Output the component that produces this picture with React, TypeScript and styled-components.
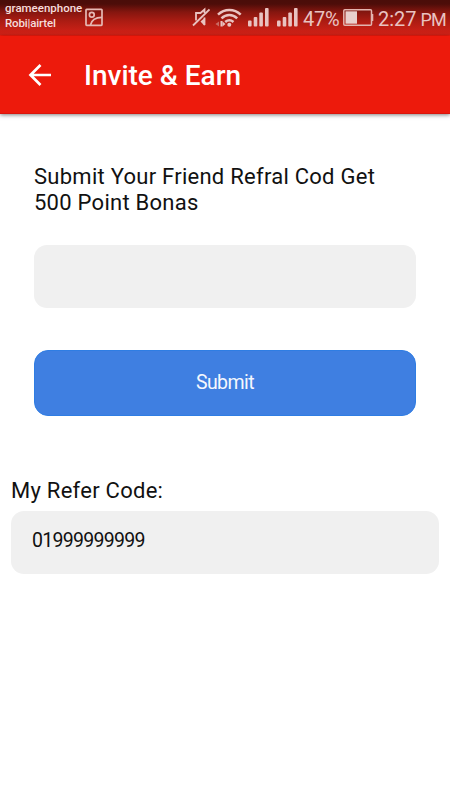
import React from "react";
import styled, { createGlobalStyle } from "styled-components";

const GlobalStyle = createGlobalStyle`
  * { box-sizing: border-box; }
  body { margin: 0; background: #fff; font-family: Roboto, "Liberation Sans", sans-serif; }
`;

const Screen = styled.div`
  width: 450px;
  height: 800px;
  display: flex;
  flex-direction: column;
  overflow: hidden;
  background: #fff;
`;

const StatusBar = styled.header`
  height: 36px;
  flex: none;
  display: flex;
  align-items: flex-start;
  padding-left: 4px;
  color: #e9c3c1;
  background: linear-gradient(#4a0d09 0, #4d0d09 4px, #85160f 12px, #ab1c13 21px, #c92016 31px, #ce2117 35px, #ed1a0c 35px);
`;

const Carriers = styled.div`
  width: 81px;
  padding: 1px 0 0 1px;
  font-size: 11.5px;
  line-height: 15px;
  font-weight: 500;
  white-space: nowrap;
  color: #f5dddc;
`;

const Carrier = styled.div<{ $spacing: number }>`
  letter-spacing: ${(p) => p.$spacing}px;
`;

const Glyph = styled.svg<{ $gap?: number }>`
  display: block;
  flex: none;
  margin-left: ${(p) => p.$gap ?? 0}px;
`;

const StatusText = styled.span<{ $gap: number; $width: number; $spacing: number }>`
  margin-left: ${(p) => p.$gap}px;
  width: ${(p) => p.$width}px;
  font-size: 20px;
  line-height: 38px;
  letter-spacing: ${(p) => p.$spacing}px;
  white-space: nowrap;

  small {
    margin-left: -1px;
    font-size: 18px;
    letter-spacing: -1px;
  }
`;

const AppBar = styled.nav`
  height: 78px;
  flex: none;
  display: flex;
  align-items: center;
  padding-left: 28px;
  background: #ed1a0c;
  border-bottom: 1px solid #d9150b;
  box-shadow: 0 1px 4px rgba(0, 0, 0, 0.5);
`;

const BackButton = styled.button`
  width: 24px;
  height: 24px;
  padding: 0;
  border: 0;
  background: none;
`;

const Title = styled.h1`
  margin: 3px 0 0 32px;
  font-size: 28px;
  line-height: 32px;
  font-weight: 500;
  color: #fff;
  white-space: nowrap;
`;

const Form = styled.form`
  display: flex;
  flex-direction: column;
  padding: 50px 34px 0;
`;

const Label = styled.label`
  font-size: 22px;
  line-height: 26px;
  letter-spacing: 0.26px;
  color: #111;
  white-space: nowrap;
`;

const Field = styled.input`
  width: 100%;
  height: 63px;
  padding: 0 21px 4px;
  border: 0;
  border-radius: 13px;
  outline: 0;
  background: #f0f0f0;
  color: #111;
  font: 400 19.5px Roboto, sans-serif;
  letter-spacing: -0.7px;
`;

const CodeField = styled(Field)`
  margin-top: 29px;
`;

const SubmitButton = styled.button`
  height: 66px;
  margin-top: 42px;
  padding: 0 0 2px;
  border: 1px solid #2f7de3;
  border-radius: 14px;
  background: #3f7fe1;
  color: #f4f7fd;
  font: 400 19.5px Roboto, sans-serif;
  letter-spacing: -0.55px;
`;

const ReferSection = styled.section`
  display: flex;
  flex-direction: column;
  gap: 7px;
  padding: 62px 11px 0;
`;

const Signal = ({ gap }: { gap: number }) => (
  <Glyph $gap={gap} width="21" height="36" viewBox="0 0 21 36" fill="#e9c3c1">
    <rect x="0" y="20.5" width="3.6" height="6" rx="1" />
    <rect x="5.7" y="17" width="3.6" height="9.5" rx="1" />
    <rect x="11.3" y="12.5" width="3.6" height="14" rx="1" />
    <rect x="17" y="8" width="3.6" height="18.5" rx="1" />
  </Glyph>
);

export default function App() {
  return (
    <Screen>
      <GlobalStyle />
      <StatusBar>
        <Carriers>
          <Carrier $spacing={0}>grameenphone</Carrier>
          <Carrier $spacing={-0.15}>Robi|airtel</Carrier>
        </Carriers>
        <Glyph width="18" height="36" viewBox="0 0 18 36" fill="none" stroke="#e6b9b4" strokeWidth="1.7">
          <rect x="1" y="9.3" width="16" height="16" rx="0.7" />
          <circle cx="6.8" cy="14.8" r="2.4" />
          <path d="M5.5 25c.8-4.300 4.500-7.600 11.500-7.700" />
        </Glyph>
        <Glyph $gap={89} width="18" height="36" viewBox="0 0 18 36" fill="none" stroke="#e9c3c1" strokeWidth="1.8">
          <path d="M12.500 13V9.500L8.500 13H4v7.500M12.500 17.500V25" />
          <path d="M1 25.500L17.500 9.500" />
          <path d="M8.500 21.500l4-3.500v8z" fill="#e9c3c1" stroke="none" />
        </Glyph>
        <Glyph $gap={5} width="27" height="36" viewBox="0 0 27 36" fill="none" stroke="#e9c3c1" strokeWidth="2.5">
          <path d="M3 14.600c6.500-6.300 16.200-6.300 22.700 0M6.500 18.400c4.600-4.400 11-4.400 15.700 0M10.200 22c2.700-2.300 5.600-2.300 8.300 0" />
          <circle cx="14.300" cy="24.700" r="2" fill="#e9c3c1" stroke="none" />
          <path d="M0.500 24l3.500-2.500v5z" fill="#c96a63" stroke="none" />
          <path d="M6.500 21v5.500" stroke="#e9c3c1" strokeWidth="2" />
          <path d="M7.500 21.500l3 2.500-3 2.500z" fill="#e9c3c1" stroke="none" />
        </Glyph>
        <Signal gap={6} />
        <Signal gap={8} />
        <StatusText $gap={5} $width={38} $spacing={-0.3}>47%</StatusText>
        <Glyph $gap={2} width="31" height="36" viewBox="0 0 31 36" fill="none" stroke="#e2b4af" strokeWidth="1.5">
          <rect x="0.800" y="9.800" width="27.700" height="15.400" rx="1" />
          <path d="M29.500 14v7" strokeWidth="1.600" />
          <rect x="2.500" y="11.300" width="11.500" height="12.400" fill="#e9cfcd" stroke="none" />
        </Glyph>
        <StatusText $gap={4} $width={72} $spacing={0}>2:27 <small>PM</small></StatusText>
      </StatusBar>
      <AppBar>
        <BackButton type="button" aria-label="Back">
          <Glyph width="24" height="24" viewBox="0 0 24 24" fill="none" stroke="#fff" strokeWidth="2.700">
            <path d="M12.500 2L2.500 12l10 10M2.500 12H23" />
          </Glyph>
        </BackButton>
        <Title>Invite &amp; Earn</Title>
      </AppBar>
      <Form onSubmit={(event) => event.preventDefault()}>
        <Label htmlFor="friend-code">
          Submit Your Friend Refral Cod Get
          <br />
          500 Point Bonas
        </Label>
        <CodeField id="friend-code" />
        <SubmitButton type="submit">Submit</SubmitButton>
      </Form>
      <ReferSection>
        <Label htmlFor="my-code">My Refer Code:</Label>
        <Field id="my-code" readOnly value="01999999999" />
      </ReferSection>
    </Screen>
  );
}
